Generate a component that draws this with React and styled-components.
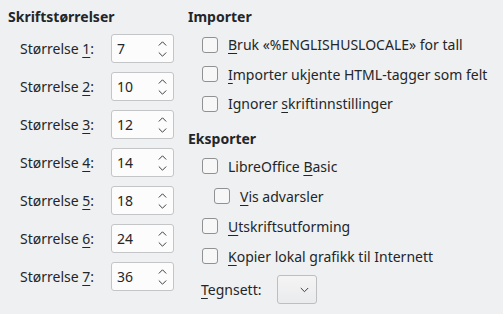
import React from "react";
import styled, { createGlobalStyle } from "styled-components";

const Global = createGlobalStyle`
  html, body { margin: 0; padding: 0; background: #eff0f1; }
  body { font-family: "Noto Sans", "DejaVu Sans", sans-serif; font-size: 14px; color: #232629; }
`;

const Page = styled.div`
  display: flex;
  width: 503px;
  height: 314px;
  box-sizing: border-box;
  padding: 8px 0 0 8px;
  background: #eff0f1;
  overflow: hidden;
`;

const LeftCol = styled.div`
  width: 180px;
  display: flex;
  flex-direction: column;
`;

const RightCol = styled.div`
  display: flex;
  flex-direction: column;
`;

const Heading = styled.div`
  font-weight: bold;
  height: 18px;
  line-height: 18px;
  margin-top: ${(p) => p.$mt || 0}px;
`;

const SizeGrid = styled.div`
  display: grid;
  grid-template-columns: 91px 63px;
  row-gap: 9px;
  margin: 8px 0 0 12px;
  align-items: center;
`;

const Label = styled.span`
  white-space: nowrap;
`;

const Mn = styled.span`
  text-decoration: underline;
  text-underline-offset: 3px;
  text-decoration-thickness: 1px;
`;

const SpinBox = styled.div`
  box-sizing: border-box;
  height: 29px;
  border: 1px solid #c3c5c7;
  border-radius: 3px;
  background: #fcfcfc;
  display: flex;
  align-items: center;
  justify-content: space-between;
  padding: 0 6px 0 5px;
`;

const Arrows = styled.svg`
  width: 9px;
  height: 18px;
  display: block;
`;

const CheckList = styled.div`
  display: flex;
  flex-direction: column;
  margin-top: ${(p) => p.$mt || 0}px;
`;

const CheckRow = styled.div`
  display: flex;
  align-items: center;
  gap: 10px;
  height: ${(p) => p.$h || 30}px;
  padding-left: ${(p) => (p.$indent ? 26 : 14)}px;
  white-space: nowrap;
`;

const Box = styled.span`
  box-sizing: border-box;
  width: 16px;
  height: 16px;
  border: 1px solid #8f9193;
  border-radius: 3px;
  background: #f7f7f8;
  flex: none;
`;

const ComboRow = styled.div`
  display: flex;
  align-items: center;
  margin-top: 4px;
  padding-left: 13px;
  height: 29px;
`;

const ComboLabel = styled.span`
  width: 76px;
`;

const Combo = styled.div`
  box-sizing: border-box;
  width: 40px;
  height: 29px;
  border: 1px solid #bcbec0;
  border-radius: 3px;
  background: linear-gradient(#f4f4f5, #eaebec);
  display: flex;
  align-items: center;
  justify-content: flex-end;
  padding-right: 7px;
`;

const Chev = styled.svg`
  width: 9px;
  height: 6px;
  display: block;
`;

const sizes = [
  ["1", "7"],
  ["2", "10"],
  ["3", "12"],
  ["4", "14"],
  ["5", "18"],
  ["6", "24"],
  ["7", "36"],
];

function Spin({ value }) {
  return (
    <SpinBox>
      <span>{value}</span>
      <Arrows viewBox="0 0 9 18">
        <path d="M0.8 5.5 L4.5 1.8 L8.2 5.5" fill="none" stroke="#3b3e41" strokeWidth="1" />
        <path d="M0.8 12.5 L4.5 16.2 L8.2 12.5" fill="none" stroke="#3b3e41" strokeWidth="1" />
      </Arrows>
    </SpinBox>
  );
}

function Check({ children, indent, h }) {
  return (
    <CheckRow $indent={indent} $h={h}>
      <Box />
      <span>{children}</span>
    </CheckRow>
  );
}

export default function App() {
  return (
    <>
      <Global />
      <Page>
        <LeftCol>
          <Heading>Skriftstørrelser</Heading>
          <SizeGrid>
            {sizes.map(([n, v]) => (
              <React.Fragment key={n}>
                <Label>
                  Størrelse <Mn>{n}</Mn>:
                </Label>
                <Spin value={v} />
              </React.Fragment>
            ))}
          </SizeGrid>
        </LeftCol>
        <RightCol>
          <Heading>Importer</Heading>
          <CheckList $mt={4}>
            <Check h={29.5}>
              <Mn>B</Mn>ruk «%ENGLISHUSLOCALE» for tall
            </Check>
            <Check h={29.5}>
              <Mn>I</Mn>mporter ukjente HTML-tagger som felt
            </Check>
            <Check h={29.5}>
              Ignorer <Mn>s</Mn>kriftinnstillinger
            </Check>
          </CheckList>
          <Heading $mt={11.5}>Eksporter</Heading>
          <CheckList $mt={3}>
            <Check>
              LibreOffice <Mn>B</Mn>asic
            </Check>
            <Check indent>
              <Mn>V</Mn>is advarsler
            </Check>
            <Check>
              <Mn>U</Mn>tskriftsutforming
            </Check>
            <Check>
              <Mn>K</Mn>opier lokal grafikk til Internett
            </Check>
          </CheckList>
          <ComboRow>
            <ComboLabel>
              <Mn>T</Mn>egnsett:
            </ComboLabel>
            <Combo>
              <Chev viewBox="0 0 9 6">
                <path d="M0.8 1 L4.5 4.7 L8.2 1" fill="none" stroke="#3b3e41" strokeWidth="1" />
              </Chev>
            </Combo>
          </ComboRow>
        </RightCol>
      </Page>
    </>
  );
}
